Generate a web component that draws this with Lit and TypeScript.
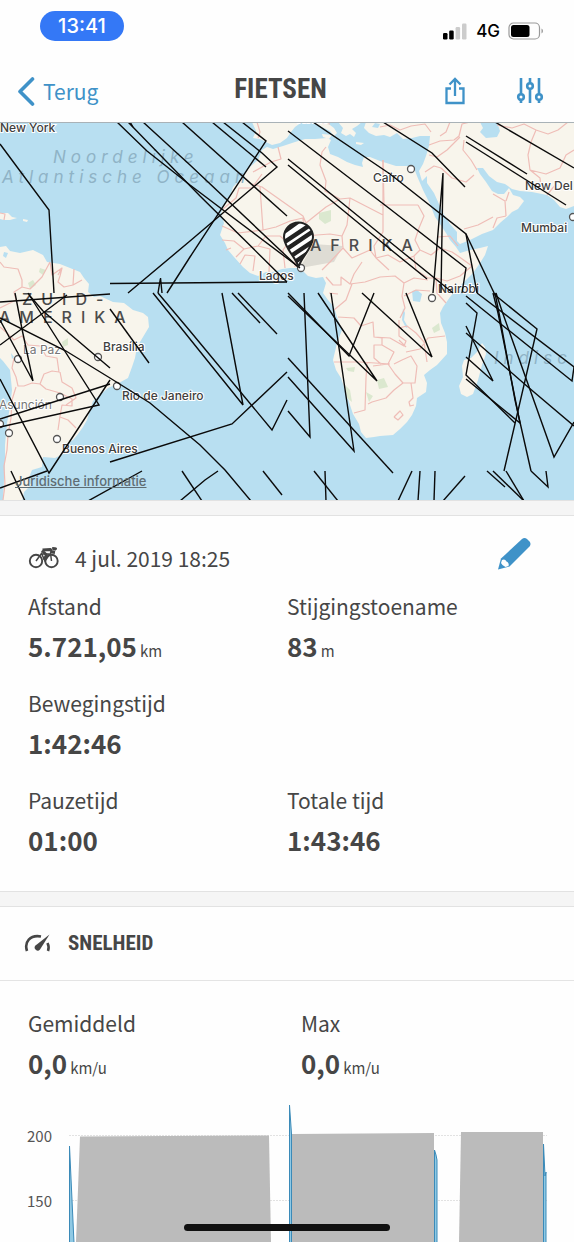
import { LitElement, html, svg, css } from "lit";
import { customElement } from "lit/decorators.js";

interface Stat {
  label: string;
  value: string;
  unit?: string;
}

const totals: (Stat | null)[] = [
  { label: "Afstand", value: "5.721,05", unit: "km" },
  { label: "Stijgingstoename", value: "83", unit: "m" },
  { label: "Bewegingstijd", value: "1:42:46" },
  null,
  { label: "Pauzetijd", value: "01:00" },
  { label: "Totale tijd", value: "1:43:46" },
];

const speeds: Stat[] = [
  { label: "Gemiddeld", value: "0,0", unit: "km/u" },
  { label: "Max", value: "0,0", unit: "km/u" },
];

const land = [
  // South America
  "M0 247 6 246 10 251 20 253 33 250 43 255 47 262 60 264 70 268 80 272 84 278 89 284 88 292 94 297 100 296 113 302 124 303 133 310 143 313 148 317 149 327 143 337 137 347 135 358 132 367 128 378 117 384 108 388 100 395 93 401 90 410 87 420 83 427 78 434 73 440 66 444 69 449 63 454 55 458 43 457 42 467 32 470 28 480 31 485 24 492 22 502 3 502 4 480 5 463 5 445 7 423 10 407 12 390 10 370 3 361 0 358Z",
  // Caribbean
  "M0 213 8 213 12 217 17 218 10 220 4 220 0 219Z M23 219 28 220 27 222 23 221Z",
  // Africa
  "M267 147 262 150 258 160 250 167 240 180 233 187 230 197 225 204 221 213 224 223 220 235 225 243 228 250 234 257 243 267 250 273 258 276 266 272 273 272 282 269 290 268 298 268 303 271 308 276 316 278 323 277 326 283 323 293 328 300 334 307 337 317 342 330 337 343 333 360 336 370 341 378 346 393 350 405 353 414 359 424 361 432 366 438 374 437 380 436 393 435 400 429 407 422 412 415 416 406 417 398 426 392 427 383 424 375 430 370 437 365 447 354 447 342 445 333 441 323 440 313 443 307 450 297 456 290 463 283 473 273 480 263 485 255 488 246 480 248 470 250 460 253 456 247 450 240 446 233 440 224 435 217 430 204 423 190 417 176 414 168 407 166 396 166 380 161 370 157 364 157 362 163 363 167 355 165 347 162 338 157 330 154 328 147 331 140 327 138 315 139 305 139 295 142 283 146 273 149Z",
  // Iberia and France
  "M252 122 256 131 253 138 260 139 266 142 272 145 280 143 287 138 291 132 295 127 302 122Z",
  // Italy, Sicily and Greece
  "M312 122 322 127 330 131 334 136 337 133 334 128 326 122Z M322 134 332 135 329 139 323 137Z M338 122 343 128 341 133 346 136 350 134 354 137 356 133 352 129 357 126 362 122Z M356 142 364 143 361 145 356 144Z",
  // Asia and Arabia
  "M366 122 364 128 369 133 376 136 384 135 390 137 397 133 403 139 412 138 420 136 430 136 429 146 426 156 423 164 419 171 422 181 427 176 427 183 434 193 443 213 450 224 457 232 457 241 460 244 470 240 482 234 493 230 501 222 507 217 512 212 518 209 524 201 520 197 513 195 509 188 504 194 498 194 492 191 486 182 480 174 477 168 483 168 489 176 497 182 505 184 512 189 520 191 532 192 547 195 554 200 560 207 566 209 574 206 574 122Z",
  // Madagascar
  "M482 343 485 347 486 354 482 365 478 380 473 394 467 397 461 394 459 386 463 377 462 366 464 360 471 358 477 352Z",
];

const lakes = [
  "M480 122 483 128 480 132 486 138 497 137 500 131 497 122Z",
  "M412 291 417 290 422 294 420 302 413 301Z",
  "M403 308 405 313 404 320 408 327 406 328 402 320Z",
  "M372 127 378 128 380 124 375 123Z",
  "M4 252 8 253 6 258 3 256Z",
  "M11 353 14 357 12 359Z",
];

const parks = [
  "M319 213 331 210 331 221 325 224 319 219Z",
  "M28 283 33 280 36 285 30 289Z",
  "M40 268 46 270 43 275 39 272Z",
  "M62 342 68 338 68 345 63 347Z",
  "M346 368 355 367 354 372 348 371Z",
  "M345 385 350 390 352 402 347 398Z",
  "M377 380 384 378 388 387 379 389Z",
  "M366 392 373 396 369 402Z",
  "M432 328 439 323 440 330 434 333Z",
  "M368 298 374 301 371 304Z",
];

const borders = [
  // South America
  "M0 262 4 267 18 269 22 280 22 287 30 289 42 277 50 262 M22 287 14 292 16 300 8 304 0 308 M50 262 52 275 62 268 60 276 58 282 64 287 73 285 82 280 M62 268 58 275 M74 269 73 285",
  "M0 327 7 333 14 340 22 336 28 345 40 346 46 356 57 358 59 372 52 371 44 374 40 384 32 383 24 386 18 386 16 377 12 368 14 358 M16 387 12 400 11 418 8 435 7 450 4 466 5 485 3 500 M40 384 46 389 60 393 72 399 72 406 62 405 60 416 58 430 M60 417 68 420 76 428 M60 372 62 382 72 388 76 398 66 405",
  "M0 213 5 214 4 220",
  // North and west Africa
  "M278 147 281 159 271 162 253 172 M262 174 252 188 239 188 236 198 223 209 M252 184 262 187 303 216 306 223 326 207 340 199 325 191 326 181 320 165 322 152 326 147 M340 199 350 198 383 215 383 160 M350 198 347 225 342 236 M383 215 383 232 374 246 376 258 M260 187 263 230 238 233 222 226 M263 230 276 227 290 221 303 218 304 236 M222 240 234 241 244 249 236 257 M226 250 231 248 M240 264 245 255 255 256 253 271 M244 249 258 246 270 249 269 272 M258 246 266 236 280 236 288 243 283 250 285 268 M288 243 296 240 295 267 M304 236 330 234 342 236 343 248 330 262 322 270 M343 248 352 258 370 250 376 258 389 270",
  "M326 277 333 285 341 285 341 277 350 284 354 274 362 262 M352 284 346 300 334 310 M350 284 365 282 380 277 395 276 404 283 M329 293 338 294",
  // Central and east Africa
  "M380 205 418 205 M383 160 384 205 M418 205 424 216 419 228 415 240 420 250 M376 258 388 255 400 262 414 256 420 250 431 255 440 248 452 252 458 256 472 266 460 276 447 281 436 278 M438 237 450 236 458 246 M414 256 416 270 428 278 436 278 437 293 446 303 M404 283 402 296 405 308 400 318 M404 283 414 278 428 280 M404 296 416 290 430 291",
  // Southern Africa
  "M338 317 354 318 361 326 373 322 374 337 382 338 382 345 374 345 374 358 381 364 M334 362 360 362 390 364 M367 363 366 378 365 410 354 413 M373 366 388 364 394 352 382 345 M388 364 395 374 403 383 415 383 417 366 411 356 402 360 394 364 M403 383 394 390 386 398 372 402 368 404 M411 383 413 398 409 402 410 406 414 405 M406 352 420 349 428 338 445 336 M399 328 407 326 416 333 424 342 427 362 M399 340 406 347 M374 337 390 338 404 346 406 341 399 336 399 320 M394 417 400 411 403 415 398 420 394 417",
  // Middle East
  "M429 145 440 141 454 140 459 136 462 124 470 122 M429 155 437 157 447 150 460 137 M425 172 434 166 441 168 M441 168 452 178 466 182 474 175 M464 140 463 150 471 160 477 170 M493 194 505 201 506 216 M506 201 509 192 M493 228 497 218 506 216 M464 229 478 225 493 217 M497 125 512 128 524 124 536 130 531 142 528 155 530 170 540 178 541 188 M536 130 548 134 558 130 568 122 M530 170 546 174 560 168 566 155 574 150 M547 195 556 184 M450 122 446 132 440 136 M380 127 390 125 400 130 411 126 425 124 431 132",
  // Europe
  "M257 122 260 132 258 138 M318 122 330 124",
];

const tracks = [
  "M0 144 49 210 54 293",
  "M0 302 110 294",
  "M117 122 147 151 190 185 300 268",
  "M128 122 200 196 287 282",
  "M130 122 133 127",
  "M143 122 190 165 298 267",
  "M182 122 287 216",
  "M212 122 266 167",
  "M223 122 262 153 277 167 190 241 128 293",
  "M242 122 266 141 190 257 167 293",
  "M288 131 390 209 466 268 462 293",
  "M313 122 390 174 466 234 477 293",
  "M466 234 496 297",
  "M288 159 390 242 453 293",
  "M288 165 390 249 427 279",
  "M383 122 432 153 465 187",
  "M495 122 574 168",
  "M466 136 527 174",
  "M466 142 566 205",
  "M433 293 443 173 441 293",
  "M110 283.5 287 282",
  "M158 293 160.5 278 162 293",
  "M153 293 243 405 222 293",
  "M158 293 190 331 272 430 287 400",
  "M232 293 260 323",
  "M238 293 277 334",
  "M288 293 349 356 374 293",
  "M288 296 377 381 318 293",
  "M304 293 310 437 288 411",
  "M331 293 354 451 288 377",
  "M288 358 393 473",
  "M287 372 232 424 110 462",
  "M362 293 432 357 406 293",
  "M0 318 66 351 110 378 150 403 200 445 225 470 251 501",
  "M0 345 43 313 67 295",
  "M0 320 33 381 22 329 15 293",
  "M28 293 99 405 0 427",
  "M30 296 43 311 110 368",
  "M110 309 149 363",
  "M0 419 110 384",
  "M0 379 49 473 110 380",
  "M0 488 47 471",
  "M11 471 25 501",
  "M88 501 142 471",
  "M182 471 202 501",
  "M180 501 205 480 218 471",
  "M263 471 282 495",
  "M314 471 338 501",
  "M325 471 326 501",
  "M412 471 398 501",
  "M420 471 418 501",
  "M435 471 434 501",
  "M465 476 443 501",
  "M487 471 505 487",
  "M493 471 524 501",
  "M506 471 524 501",
  "M531 471 548 487 546 471",
  "M493 293 498 313 520 423 466 379",
  "M495 293 499 313 515 400 531 471",
  "M496 293 502 311 554 457 574 422",
  "M466 333 528 387 574 426",
  "M466 326 493 381 466 357",
  "M466 303 477 313 466 375 515 423",
  "M466 296 572 381 574 367",
  "M477 293 574 367",
  "M495 295 537 329 504 471",
];

const cities: [number, number][] = [
  [411, 169], [432, 298], [573, 217], [18, 359], [98, 357], [60, 397],
  [117, 386], [9, 433], [57, 439], [0, 424], [301, 268],
];

const pinShape = "M298.5 267C296 257 284 248 284 237A14.5 14.5 0 0 1 313 237C313 248 301 257 298.5 267Z";

const mapArt = svg`
  <g class="land">${land.map((d) => svg`<path d=${d} />`)}</g>
  <path class="shade" d="M300 268 313 244 343 246 334 262 306 267Z" />
  <g class="park">${parks.map((d) => svg`<path d=${d} />`)}</g>
  <g class="lake">${lakes.map((d) => svg`<path d=${d} />`)}</g>
  <g class="border">${borders.map((d) => svg`<path d=${d} />`)}</g>
  <g class="sea">
    <text x="53" y="163">Noordelijke</text>
    <text x="2" y="183">Atlantische Oceaan</text>
    <text x="494" y="364">Indisc</text>
  </g>
  <g class="continent">
    <text x="22" y="305">ZUID-</text>
    <text x="-1" y="323">AMERIKA</text>
    <text x="310" y="251">AFRIKA</text>
  </g>
  <g class="city minor">
    <text x="23" y="354">La Paz</text>
    <text x="-1" y="409">Asunción</text>
  </g>
  <g class="city">
    <text x="0" y="132">New York</text>
    <text x="297" y="123">Rome</text>
    <text x="373" y="182">Caïro</text>
    <text x="525" y="190">New Del</text>
    <text x="521" y="232">Mumbai</text>
    <text x="259" y="280">Lagos</text>
    <text x="438" y="293">Nairobi</text>
    <text x="103" y="351">Brasília</text>
    <text x="122" y="400">Rio de Janeiro</text>
    <text x="62" y="453">Buenos Aires</text>
  </g>
  <g class="dot">${cities.map(([x, y]) => svg`<circle cx=${x} cy=${y} r="3.5" />`)}</g>
  <g class="track">${tracks.map((d) => svg`<path d=${d} />`)}</g>
  <defs>
    <clipPath id="pin"><path d=${pinShape} /></clipPath>
  </defs>
  <path d=${pinShape} fill="#fff" stroke="#222" stroke-width="2" />
  <g clip-path="url(#pin)" stroke="#222" stroke-width="4.4">
    <path d="M278 236 306 216M280 245 316 221M284 251 318 228M288 258 318 238M292 264 314 249" />
  </g>
`;

@customElement("app-root")
export class AppRoot extends LitElement {
  static styles = css`
    :host {
      display: block;
      min-height: 100vh;
      background: #fefefe;
      color: #464646;
      font-family: "Noto Sans CJK SC", "Noto Sans", sans-serif;
      font-size: 21px;
    }
    * {
      box-sizing: border-box;
    }
    svg {
      display: block;
      flex: none;
    }
    button {
      padding: 0;
      border: 0;
      background: none;
      color: #3f92c8;
      font: inherit;
      cursor: pointer;
    }
    .status {
      display: flex;
      align-items: center;
      justify-content: space-between;
      height: 62px;
      padding: 0 30px 0 40px;
      font-family: Inter, sans-serif;
    }
    .clock {
      width: 84px;
      height: 30px;
      margin-bottom: 10px;
      border-radius: 15px;
      background: #3478f6;
      color: #fff;
      font-size: 20px;
      font-weight: 500;
      line-height: 30px;
      text-align: center;
    }
    .signals {
      display: flex;
      align-items: center;
      gap: 8px;
      color: #000;
      font-size: 17px;
      font-weight: 500;
    }
    .nav {
      display: grid;
      grid-template-columns: 1fr auto 1fr;
      align-items: center;
      height: 61px;
      padding: 0 30px 2px 17px;
      border-bottom: 1px solid #a9b2b7;
    }
    .back {
      display: flex;
      align-items: center;
      justify-self: start;
      gap: 8px;
      line-height: 32px;
    }
    .actions {
      display: flex;
      align-items: center;
      justify-self: end;
      gap: 50px;
    }
    .title,
    .heading {
      margin: 0;
      font-family: "Roboto Condensed", "Liberation Sans Narrow", "Liberation Sans", sans-serif;
      font-weight: 700;
      text-transform: uppercase;
      line-height: 32px;
    }
    .title {
      padding-bottom: 4px;
      font-size: 27px;
    }
    .heading {
      font-size: 21px;
    }
    .map {
      position: relative;
      overflow: hidden;
      background: #b8dff1;
    }
    .map svg {
      width: 100%;
      height: auto;
    }
    .land { fill: #f8f5ec; }
    .shade { fill: #000; opacity: 0.1; }
    .park { fill: #dbe8cf; }
    .lake { fill: #b8dff1; }
    .border {
      fill: none;
      stroke: #efbdb7;
      stroke-width: 1.2;
      stroke-linejoin: round;
    }
    .track {
      fill: none;
      stroke: #0a0a0a;
      stroke-width: 1.4;
    }
    .dot {
      fill: #fff;
      stroke: #555;
      stroke-width: 1.3;
    }
    .sea {
      fill: #8fb3c6;
      font: italic 400 17px Inter, sans-serif;
      letter-spacing: 5px;
    }
    .continent {
      fill: #4c4c4c;
      font: 500 16px Inter, sans-serif;
      letter-spacing: 9px;
    }
    .city {
      fill: #404040;
      stroke: #fff;
      stroke-width: 2px;
      paint-order: stroke;
      font: 500 12px Inter, sans-serif;
    }
    .city.minor {
      fill: #777;
      font-weight: 400;
    }
    .legal {
      position: absolute;
      bottom: 11px;
      left: 15px;
      color: #5f6d74;
      font: 500 13px/16px Inter, sans-serif;
    }
    .band {
      height: 16px;
      border: solid #e2e2e2;
      border-width: 1px 0;
      background: #f5f5f5;
    }
    .summary {
      padding: 21px 28px 31px;
    }
    .when {
      display: flex;
      align-items: center;
      height: 42px;
      margin-bottom: 8px;
    }
    .when time {
      flex: 1;
      margin-left: 15px;
      line-height: 32px;
    }
    .edit {
      margin: 0 15px 8px 0;
    }
    .stats {
      display: grid;
      grid-template-columns: 1fr 1fr;
      row-gap: 18px;
      margin: 0;
    }
    .label {
      line-height: 38px;
    }
    .value {
      margin: 0;
      font-size: 26px;
      font-weight: 700;
      line-height: 41px;
    }
    .unit {
      margin-left: 3px;
      font-size: 15px;
      font-weight: 400;
      line-height: 16px;
    }
    .bar {
      display: flex;
      align-items: center;
      gap: 17px;
      height: 74px;
      padding: 0 24px 2px;
      border-bottom: 1px solid #e4e4e4;
    }
    .speed {
      padding: 23px 0 17px 28px;
    }
    .chart {
      height: 142px;
      overflow: hidden;
    }
    .chart svg {
      width: 100%;
      height: auto;
    }
    .tick {
      font-size: 15px;
    }
    .home {
      position: fixed;
      bottom: 11px;
      left: 50%;
      width: 206px;
      height: 7px;
      margin-left: -103px;
      border-radius: 4px;
      background: #111;
    }
  `;

  private stat(s: Stat | null) {
    if (!s) return html`<div></div>`;
    return html`<div>
      <dt class="label">${s.label}</dt>
      <dd class="value">${s.value}${s.unit ? html`<span class="unit">${s.unit}</span>` : ""}</dd>
    </div>`;
  }

  render() {
    return html`
      <div class="status">
        <div class="clock">13:41</div>
        <div class="signals">
          <svg width="25" height="17" viewBox="0 0 25 17">
            <rect x="0" y="10" width="4.5" height="6.5" rx="1.2" fill="#000" />
            <rect x="6.200" y="7.500" width="4.500" height="9" rx="1.200" fill="#000" />
            <rect x="12.600" y="4" width="4.500" height="12.500" rx="1.200" fill="#ccc" />
            <rect x="19" y="0.500" width="4.500" height="16" rx="1.200" fill="#ccc" />
          </svg>
          <span>4G</span>
          <svg width="36" height="18" viewBox="0 0 36 18">
            <rect x="1" y="1" width="30.500" height="16" rx="4.500" fill="none" stroke="#999" stroke-width="1.200" />
            <rect x="3" y="3" width="18.500" height="12" rx="2.500" fill="#000" />
            <path d="M33.500 6.500C35.500 7.500 35.500 10.500 33.500 11.500Z" fill="#999" />
          </svg>
        </div>
      </div>

      <nav class="nav">
        <button class="back">
          <svg width="18" height="29" viewBox="0 0 18 29" fill="none" stroke="currentColor" stroke-width="3.600" stroke-linecap="round" stroke-linejoin="round">
            <path d="M15.500 2 3 14.500 15.500 27" />
          </svg>
          <span>Terug</span>
        </button>
        <h1 class="title">Fietsen</h1>
        <div class="actions">
          <button aria-label="Delen">
            <svg width="22" height="28" viewBox="0 0 22 28" fill="none" stroke="currentColor" stroke-width="2.300">
              <path d="M7 11.500H2.500V26H19.500V11.500H15M11 19V2.500M5.500 7.500 11 2 16.500 7.500" />
            </svg>
          </button>
          <button aria-label="Instellingen">
            <svg width="28" height="28" viewBox="0 0 28 28" fill="none" stroke="currentColor" stroke-width="2.600">
              <path d="M5 1V17M5 23V26M14 1V6M14 12V26M23 1V17M23 23V26" />
              <circle cx="5" cy="20" r="2.800" /><circle cx="14" cy="9" r="2.800" /><circle cx="23" cy="20" r="2.800" />
            </svg>
          </button>
        </div>
      </nav>

      <div class="map">
        <svg viewBox="0 123 574 377" role="img" aria-label="Kaart">${mapArt}</svg>
        <a class="legal" href="#legal">Juridische informatie</a>
      </div>
      <div class="band"></div>

      <section class="summary">
        <div class="when">
          <svg width="32" height="24" viewBox="0 0 32 24" fill="none" stroke="currentColor">
            <circle cx="8" cy="15" r="6.200" stroke-width="1.900" />
            <circle cx="23.500" cy="15" r="6.200" stroke-width="1.900" />
            <path d="M8 15 13.500 7.500 17 15 22.500 7 23.500 15M13 8H21" stroke-width="1.500" />
            <path d="M14.500 4 22.500 3.500 24 6 27 6.500M14 4.500 18.500 9 16 14" stroke-width="2.800" stroke-linejoin="round" />
            <path d="M24.500 1.500 28.500 2 28 4 25 4Z" fill="currentColor" />
          </svg>
          <time datetime="2019-07-04T18:25">4 jul. 2019 18:25</time>
          <button class="edit" aria-label="Bewerken">
            <svg width="34" height="32" viewBox="0 0 34 32" fill="currentColor">
              <path d="M25 1Q27.500 -1 30 1L32.500 3.500Q34.500 6 32.500 8.500L12.500 28.500 1 31.500 4 20.500Z" />
              <path d="M5 22Q8 20.500 9.500 23.500 12.500 25 11.500 28L8.500 29Q5 27.500 4 25Z" fill="#fefefe" />
            </svg>
          </button>
        </div>
        <dl class="stats">${totals.map((s) => this.stat(s))}</dl>
      </section>
      <div class="band"></div>

      <section>
        <header class="bar">
          <svg width="27" height="20" viewBox="0 0 27 20">
            <path d="M3 18C0 9 6 1.500 17 3.500" fill="none" stroke="currentColor" stroke-width="2.600" />
            <path d="M25.500 1.500 11.500 12.500A3 3 0 1 0 16 16.500Z" fill="currentColor" />
            <path d="M23.500 10Q25.500 14 24 18" fill="none" stroke="currentColor" stroke-width="2.600" />
          </svg>
          <h2 class="heading">Snelheid</h2>
        </header>
        <dl class="stats speed">${speeds.map((s) => this.stat(s))}</dl>
        <div class="chart">
          <svg viewBox="0 1100 574 142" role="img" aria-label="Snelheid">
            <path d="M69 1135.500H547M69 1200.500H547" stroke="#e2e2e2" stroke-dasharray="2 1" />
            <g fill="#bbb">
              <path d="M76 1242 80 1136.500 269 1135.500 271 1242Z" />
              <path d="M291 1242V1134L434 1133V1242Z" />
              <path d="M459 1242 461 1132H543V1242Z" />
            </g>
            <g fill="#8fc9e4" stroke="#3b8ab8">
              <path d="M69.500 1243V1146L74 1243Z" />
              <path d="M289.500 1243V1105L291.500 1134V1243Z" />
              <path d="M434.500 1243V1150L436 1155 437 1160V1243Z" />
              <path d="M543.500 1243V1144L545 1176 546 1172V1243Z" />
            </g>
            <g class="tick" fill="#555">
              <text x="27" y="1142">200</text>
              <text x="27" y="1207">150</text>
            </g>
          </svg>
        </div>
      </section>
      <div class="home"></div>
    `;
  }
}
